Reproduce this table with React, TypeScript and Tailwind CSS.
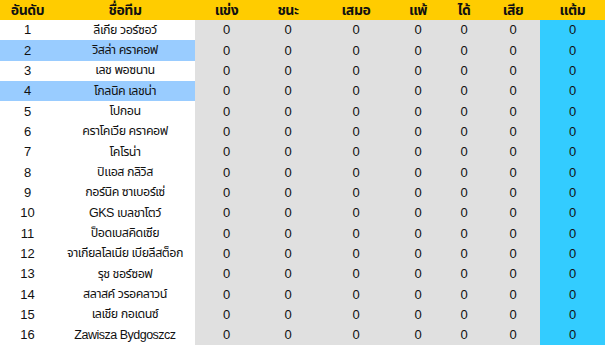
import React from "react";

interface TeamRow {
  rank: number;
  name: string;
  highlight?: boolean;
}

const teams: TeamRow[] = [
  { rank: 1, name: "ลีเกีย วอร์ซอว์" },
  { rank: 2, name: "วิสล่า คราคอฟ", highlight: true },
  { rank: 3, name: "เลช พอซนาน" },
  { rank: 4, name: "โกลนิค เลชน่า", highlight: true },
  { rank: 5, name: "โปกอน" },
  { rank: 6, name: "คราโคเวีย คราคอฟ" },
  { rank: 7, name: "โคโรน่า" },
  { rank: 8, name: "ปิแอส กลิวิส" },
  { rank: 9, name: "กอร์นิค ซาเบอร์เซ่" },
  { rank: 10, name: "GKS เบลชาโตว์" },
  { rank: 11, name: "ป็อดเบสคิดเซีย" },
  { rank: 12, name: "จาเกียลโลเนีย เบียลีสต็อก" },
  { rank: 13, name: "รุช ชอร์ซอฟ" },
  { rank: 14, name: "สลาสค์ วรอคลาวน์" },
  { rank: 15, name: "เลเชีย กอเดนซ์" },
  { rank: 16, name: "Zawisza Bydgoszcz" },
];

const statCols = [
  { label: "แข่ง", w: "w-[63px]" },
  { label: "ชนะ", w: "w-[60px]" },
  { label: "เสมอ", w: "w-[76px]" },
  { label: "แพ้", w: "w-[48px]" },
  { label: "ได้", w: "w-[44px]" },
  { label: "เสีย", w: "w-[54px]" },
];

const App: React.FC = () => {
  return (
    <div
      className="w-[605px] h-[345px] overflow-hidden bg-white text-[13px] text-[#111]"
      style={{
        fontFamily:
          '"Liberation Sans", "Noto Sans Thai", "Noto Sans Thai UI", Loma, Garuda, "Tlwg Typo", sans-serif',
      }}
    >
      <div className="flex h-[20px] items-center bg-[#ffcc00] font-bold text-[14px] tracking-[-0.4px]">
        <div className="w-[55px] text-center">อันดับ</div>
        <div className="w-[140px] text-center">ชื่อทีม</div>
        {statCols.map((c) => (
          <div key={c.label} className={`${c.w} text-center`}>
            {c.label}
          </div>
        ))}
        <div className="flex-1 text-center">แต้ม</div>
      </div>
      {teams.map((t) => (
        <div key={t.rank} className="flex h-[20.33px] items-center">
          <div
            className={`flex h-full w-[195px] items-center ${
              t.highlight ? "bg-[#99ccff]" : "bg-white"
            }`}
          >
            <div className="w-[55px] text-center">{t.rank}</div>
            <div className="w-[140px] whitespace-nowrap text-center text-[12.5px] tracking-[-0.5px]">
              {t.name}
            </div>
          </div>
          <div className="flex h-full items-center bg-[#e0e0e0]">
            {statCols.map((c) => (
              <div key={c.label} className={`${c.w} text-center`}>
                0
              </div>
            ))}
          </div>
          <div className="flex h-full flex-1 items-center justify-center bg-[#33ccff]">0</div>
        </div>
      ))}
    </div>
  );
};

export default App;
